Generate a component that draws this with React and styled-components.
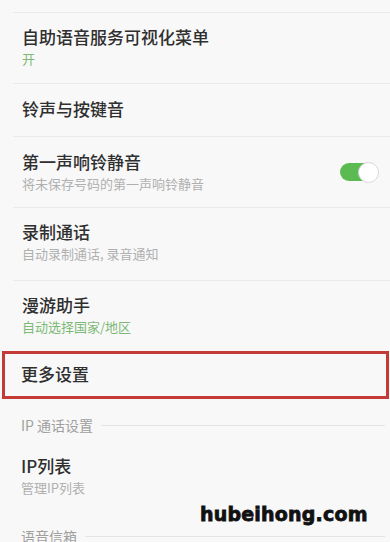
import React from "react";
import styled, { createGlobalStyle } from "styled-components";

const GlobalStyle = createGlobalStyle`
  html, body { margin: 0; padding: 0; background: #f8f8f8; }
  body { font-family: "Noto Sans CJK SC", "Noto Sans", sans-serif; }
`;

const Page = styled.div`
  position: relative;
  width: 390px;
  height: 542px;
  overflow: hidden;
  background: #f8f8f8;
  padding-top: 12px;
  box-sizing: border-box;
`;

const Item = styled.div`
  display: flex;
  align-items: center;
  margin-left: 13px;
  padding: ${(p) => p.$pt ?? 12}px 12px ${(p) => p.$pb ?? 15}px 9px;
  border-top: 1px solid #ebebeb;
`;

const HighlightItem = styled.div`
  display: flex;
  align-items: center;
  margin: 0 1px 0 2px;
  height: 48px;
  box-sizing: border-box;
  border: 3px solid #c33a37;
  padding-left: 16px;
  padding-bottom: 3px;
`;

const Texts = styled.div`
  flex: 1;
  display: flex;
  flex-direction: column;
`;

const Title = styled.div`
  font-size: 17px;
  line-height: 24px;
  color: #2f2f2f;
  font-weight: 500;
`;

const Sub = styled.div`
  font-size: 13px;
  line-height: 18px;
  margin-top: 1px;
  color: ${(p) => (p.$green ? "#7cb876" : "#b0b0b0")};
`;

const Toggle = styled.div`
  position: relative;
  width: 36px;
  height: 18px;
  border-radius: 9px;
  background: #5cba53;
  margin-right: 2px;
`;

const Knob = styled.div`
  position: absolute;
  right: -3px;
  top: -1px;
  width: 19px;
  height: 19px;
  border-radius: 50%;
  background: #ffffff;
  border: 1px solid #d8d8d8;
`;

const Section = styled.div`
  display: flex;
  align-items: center;
  gap: 8px;
  padding: 0 5px 0 21px;
  margin-top: ${(p) => p.$mt}px;
  font-size: 14px;
  line-height: 18px;
  color: #a0a0a0;
  &::after {
    content: "";
    flex: 1;
    height: 1px;
    background: #e4e4e4;
  }
`;

const PlainItem = styled.div`
  padding: 20px 0 0 21px;
  display: flex;
  flex-direction: column;
`;

const Watermark = styled.div`
  position: absolute;
  left: 200px;
  top: 503px;
  font-family: "DejaVu Sans", sans-serif;
  font-weight: 700;
  font-size: 19px;
  letter-spacing: 0.2px;
  color: #111;
  -webkit-text-stroke: 0.8px #111;
`;

export default function App() {
  return (
    <>
      <GlobalStyle />
      <Page>
        <Item>
          <Texts>
            <Title>自助语音服务可视化菜单</Title>
            <Sub $green>开</Sub>
          </Texts>
        </Item>
        <Item $pt={13} $pb={15}>
          <Texts>
            <Title>铃声与按键音</Title>
          </Texts>
        </Item>
        <Item $pt={13} $pb={14}>
          <Texts>
            <Title>第一声响铃静音</Title>
            <Sub>将未保存号码的第一声响铃静音</Sub>
          </Texts>
          <Toggle>
            <Knob />
          </Toggle>
        </Item>
        <Item $pt={12} $pb={17}>
          <Texts>
            <Title>录制通话</Title>
            <Sub>自动录制通话, 录音通知</Sub>
          </Texts>
        </Item>
        <Item>
          <Texts>
            <Title>漫游助手</Title>
            <Sub $green>自动选择国家/地区</Sub>
          </Texts>
        </Item>
        <HighlightItem>
          <Title>更多设置</Title>
        </HighlightItem>
        <Section $mt={17}>IP 通话设置</Section>
        <PlainItem>
          <Title>IP列表</Title>
          <Sub>管理IP列表</Sub>
        </PlainItem>
        <Section $mt={30}>语音信箱</Section>
        <Watermark>hubeihong.com</Watermark>
      </Page>
    </>
  );
}
